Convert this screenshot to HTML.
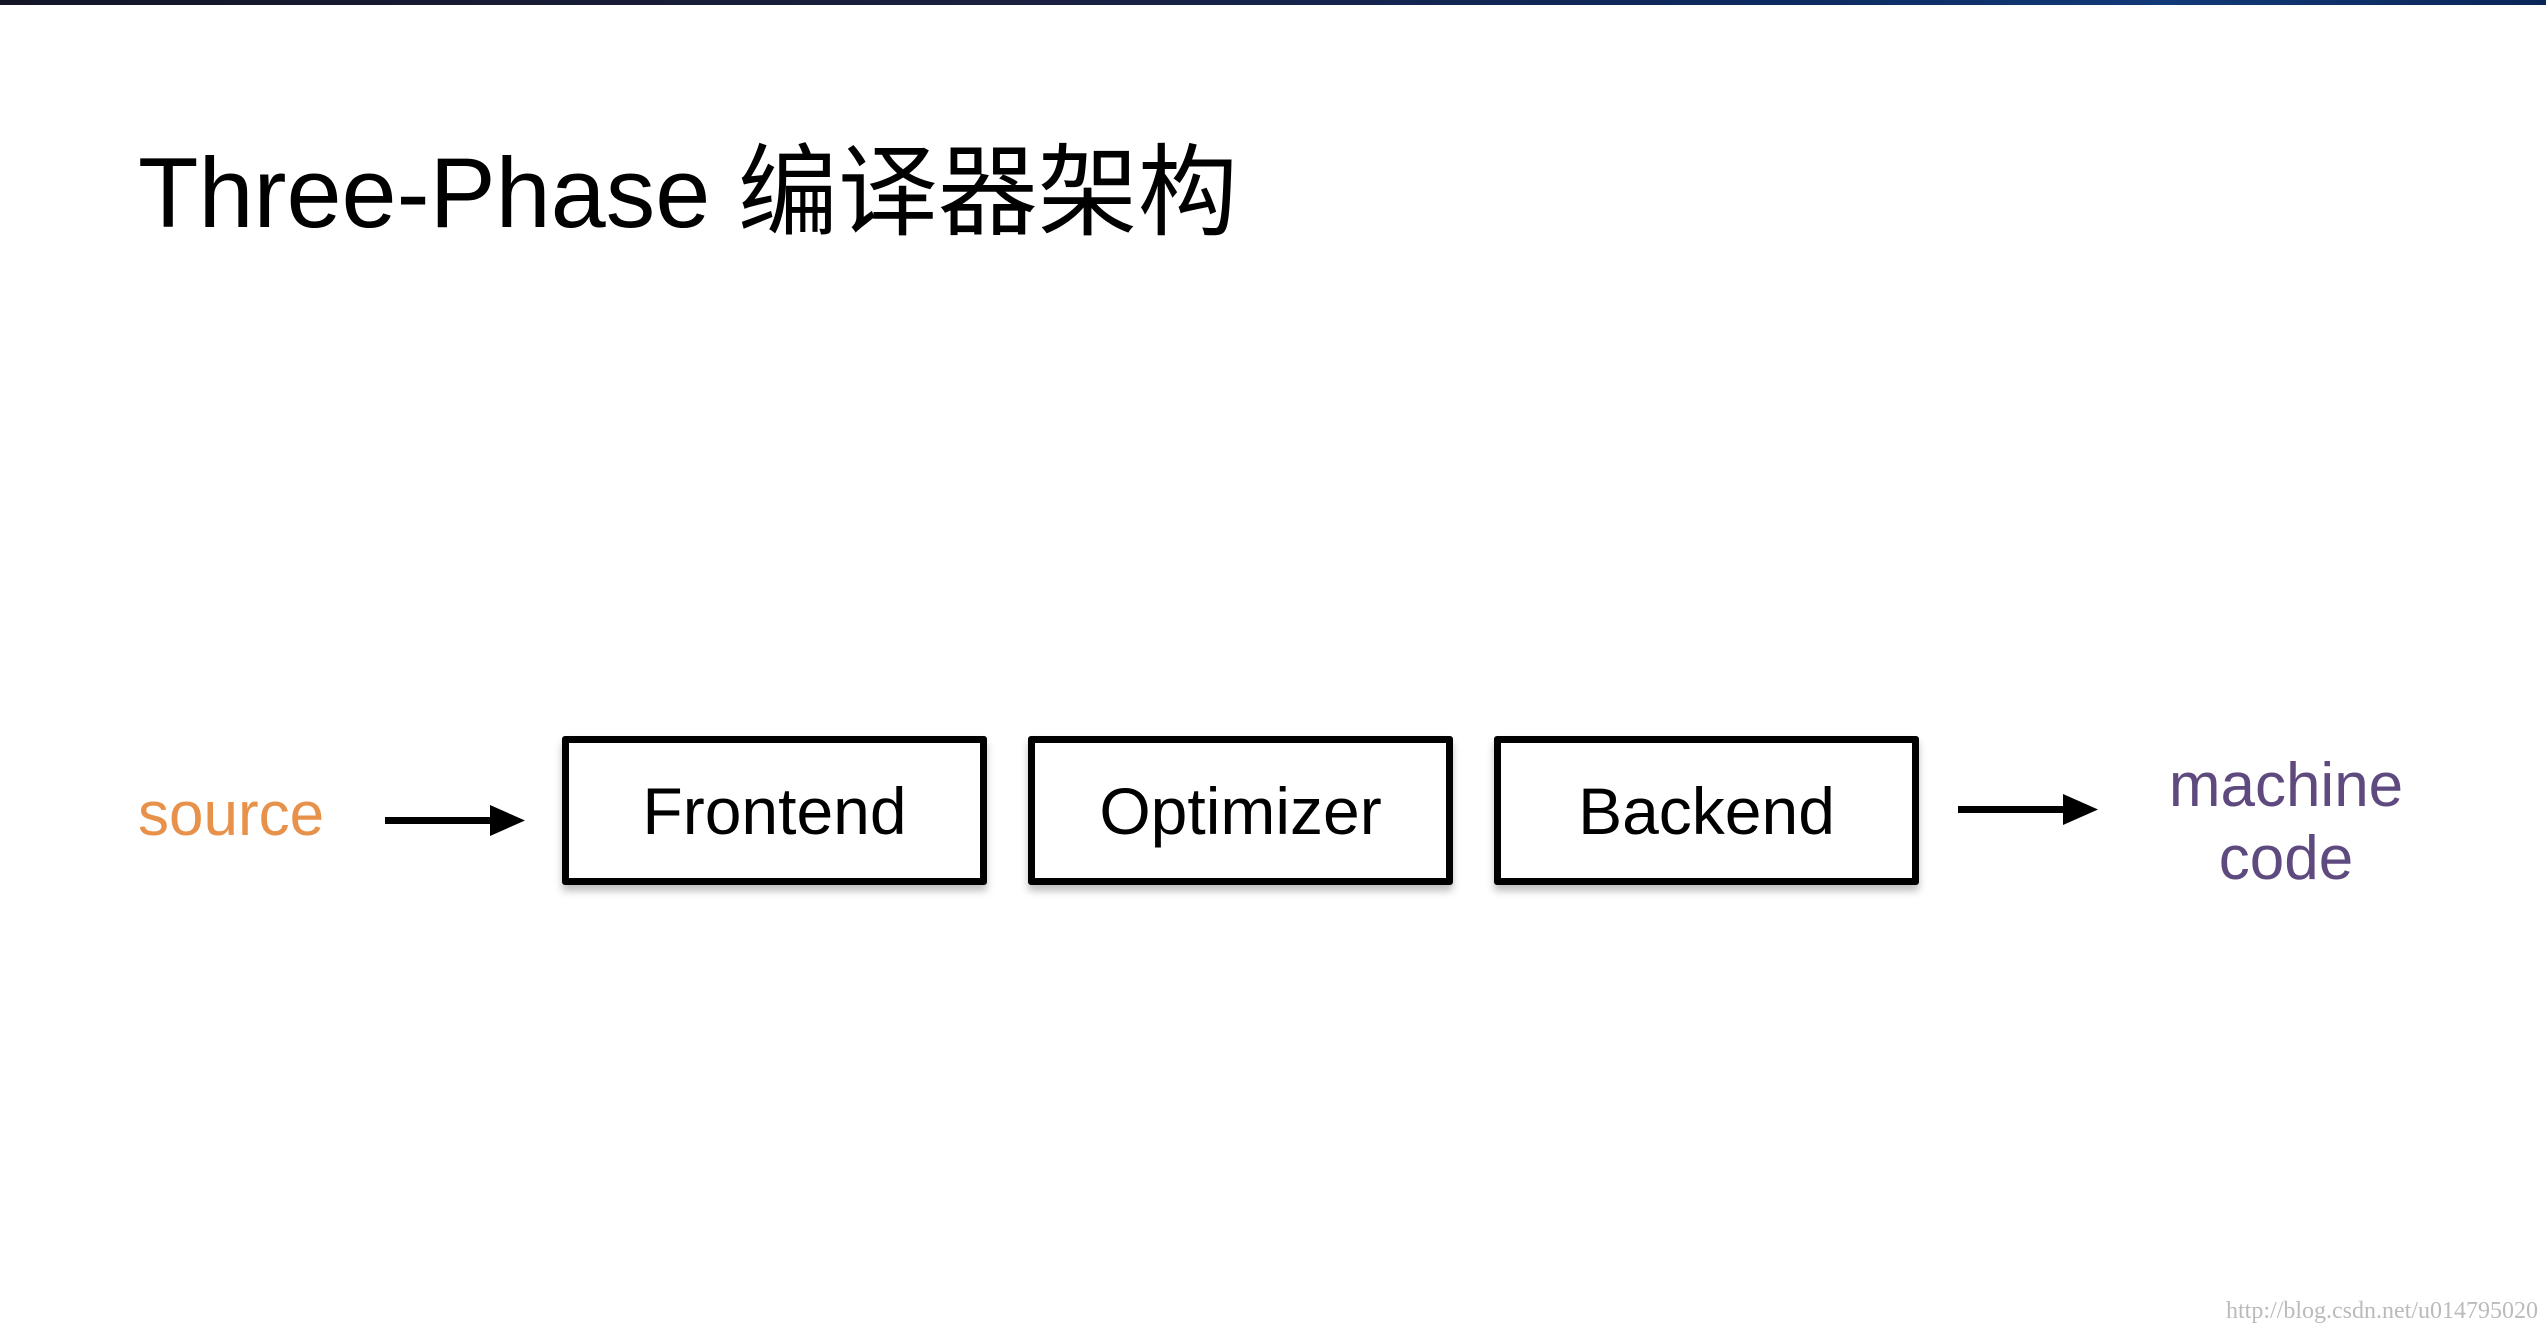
<!DOCTYPE html>
<html><head><meta charset="utf-8"><style>
html,body{margin:0;padding:0;background:#fff;}
body{width:2546px;height:1334px;position:relative;overflow:hidden;font-family:"Liberation Sans","Noto Sans CJK SC",sans-serif;}
.bar{position:absolute;left:0;top:0;width:2546px;height:5px;background:linear-gradient(90deg,#141628,#1a2040 40%,#0c2a60 70%,#123a78 85%,#0a2558);}
.t{position:absolute;white-space:nowrap;}
.box{position:absolute;top:736px;width:411px;height:135px;border:7px solid #000;border-radius:3px;box-shadow:0 6px 8px rgba(0,0,0,.25);display:flex;align-items:center;justify-content:center;font-size:66px;color:#000;}
</style></head><body>
<div class="bar"></div>
<div class="t" style="left:138px;top:138px;font-size:99px;line-height:110px;color:#000;"><span>Three-Phase</span> <span style="font-size:100px">编译器架构</span></div>
<div class="t" style="left:138px;top:780px;font-size:62px;line-height:70px;color:#e8914a;">source</div>
<svg style="position:absolute;left:380px;top:800px" width="150" height="44"><rect x="5" y="17" width="110" height="7" fill="#000"/><path d="M110 5 L145 20.5 L110 36 Z" fill="#000"/></svg>
<div class="box" style="left:562px;">Frontend</div>
<div class="box" style="left:1028px;">Optimizer</div>
<div class="box" style="left:1494px;">Backend</div>
<svg style="position:absolute;left:1955px;top:789px" width="150" height="44"><rect x="3" y="17" width="110" height="7" fill="#000"/><path d="M108 5 L143 20.5 L108 36 Z" fill="#000"/></svg>
<div class="t" style="left:2136px;top:749px;width:300px;text-align:center;font-size:62px;line-height:73px;color:#5e4a7e;">machine<br>code</div>
<div class="t" style="left:2226px;top:1298px;font-family:'Liberation Serif',serif;font-size:24px;color:#bbb;">http://blog.csdn.net/u014795020</div>
</body></html>
